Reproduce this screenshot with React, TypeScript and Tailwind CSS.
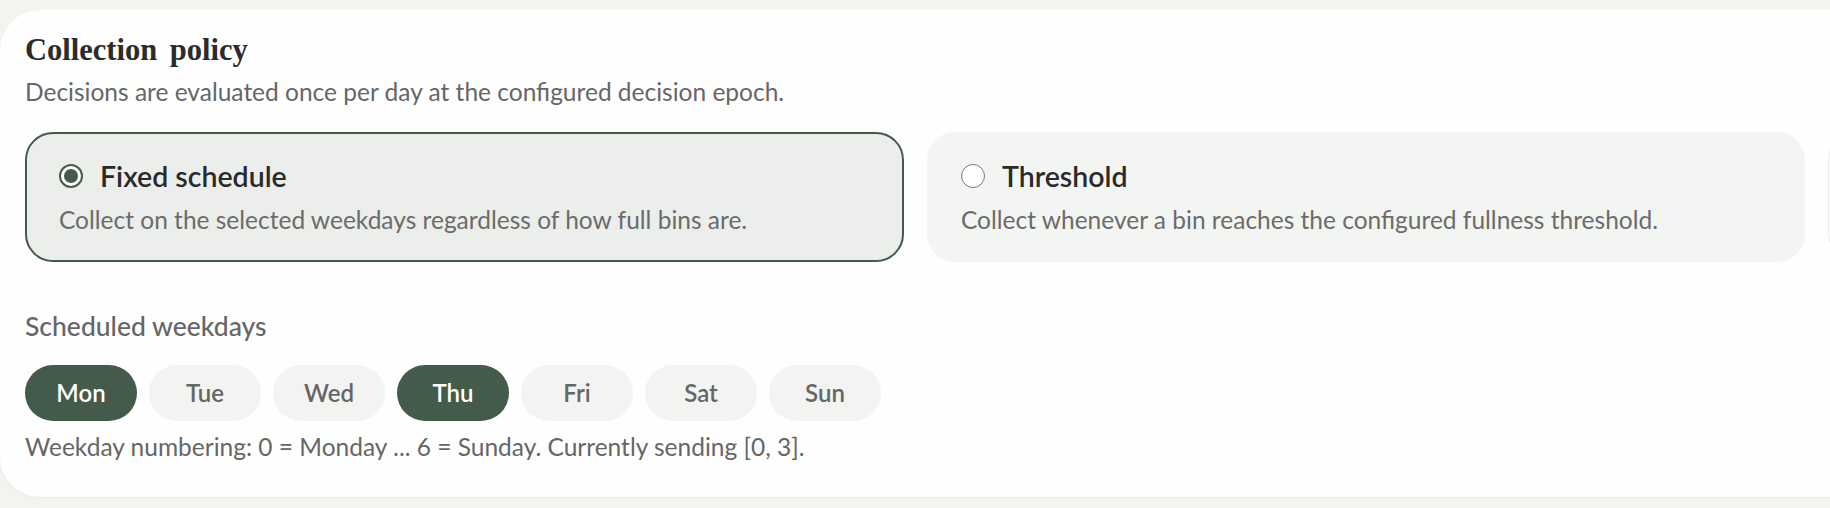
import React, { useState } from 'react';

const DAYS: { value: number; label: string }[] = [
  { value: 0, label: 'Mon' },
  { value: 1, label: 'Tue' },
  { value: 2, label: 'Wed' },
  { value: 3, label: 'Thu' },
  { value: 4, label: 'Fri' },
  { value: 5, label: 'Sat' },
  { value: 6, label: 'Sun' },
];

type PolicyType = 'fixed' | 'threshold';

const POLICIES: { value: PolicyType; label: string; description: string }[] = [
  {
    value: 'fixed',
    label: 'Fixed schedule',
    description: 'Collect on the selected weekdays regardless of how full bins are.',
  },
  {
    value: 'threshold',
    label: 'Threshold',
    description: 'Collect whenever a bin reaches the configured fullness threshold.',
  },
];

const RadioDot: React.FC<{ checked: boolean }> = ({ checked }) => (
  <span
    className={`flex h-[24px] w-[24px] shrink-0 items-center justify-center rounded-full bg-white ${
      checked ? 'border-2 border-[#445a4b]' : 'border-[1.5px] border-[#777777]'
    }`}
  >
    {checked && <span className="h-[14px] w-[14px] rounded-full bg-[#445a4b]" />}
  </span>
);

export default function App() {
  const [policy, setPolicy] = useState<PolicyType>('fixed');
  const [weekdays, setWeekdays] = useState<number[]>([0, 3]);

  const toggleDay = (day: number) => {
    setWeekdays((prev) =>
      prev.includes(day) ? prev.filter((d) => d !== day) : [...prev, day].sort((a, b) => a - b)
    );
  };

  return (
    <div className="min-h-screen overflow-hidden bg-[#f4f3ef] pt-[10px] font-['Lato','Noto_Sans',sans-serif]">
      <section className="w-[1900px] rounded-l-[40px] bg-[#fefefe] pb-[34px] pl-[25px] pt-[22px] shadow-[0_1px_3px_rgba(0,0,0,0.04)]">
        <h2 className="font-['Liberation_Serif',serif] text-[30.5px] font-bold leading-[36px] text-[#2b2b2b] [word-spacing:5px]">
          Collection policy
        </h2>
        <p className="mt-[8px] text-[24.5px] leading-[32px] text-[#666666]">
          Decisions are evaluated once per day at the configured decision epoch.
        </p>

        {/* Policy options */}
        <div className="mt-[24px] grid grid-cols-[879px_878px_879px] gap-[23px]">
          {POLICIES.map((p) => {
            const selected = policy === p.value;
            return (
              <button
                key={p.value}
                onClick={() => setPolicy(p.value)}
                className={`flex h-[130px] flex-col rounded-[28px] border-2 px-[32px] pt-[24px] text-left ${
                  selected ? 'border-[#445a4b] bg-[#eceeec]' : 'border-[#f3f5f2] bg-[#f3f5f2]'
                }`}
              >
                <div className="flex items-center gap-[17px]">
                  <RadioDot checked={selected} />
                  <span className="text-[28.5px] font-semibold leading-[36px] text-[#2a2a2a]">{p.label}</span>
                </div>
                <span className="mt-[10px] text-[24.5px] leading-[32px] text-[#6b6b6b]">{p.description}</span>
              </button>
            );
          })}
          {/* next option, off-screen */}
          <div className="h-[130px] rounded-[28px] border border-[#ebebe7] bg-white" />
        </div>

        {/* Weekday picker */}
        <div className="mt-[47px] text-[26.5px] font-medium leading-[34px] text-[#666666]">Scheduled weekdays</div>
        <div className="mt-[22px] flex gap-[12px]">
          {DAYS.map((d) => {
            const active = weekdays.includes(d.value);
            return (
              <button
                key={d.value}
                onClick={() => toggleDay(d.value)}
                className={`h-[56px] w-[112px] rounded-full text-[24px] font-semibold ${
                  active ? 'bg-[#445a4b] text-white' : 'bg-[#f3f4f1] text-[#666666]'
                }`}
              >
                {d.label}
              </button>
            );
          })}
        </div>
        <p className="mt-[10px] text-[24.5px] leading-[32px] text-[#666666]">
          Weekday numbering: 0 = Monday ... 6 = Sunday. Currently sending [{weekdays.join(', ')}].
        </p>
      </section>
    </div>
  );
}
